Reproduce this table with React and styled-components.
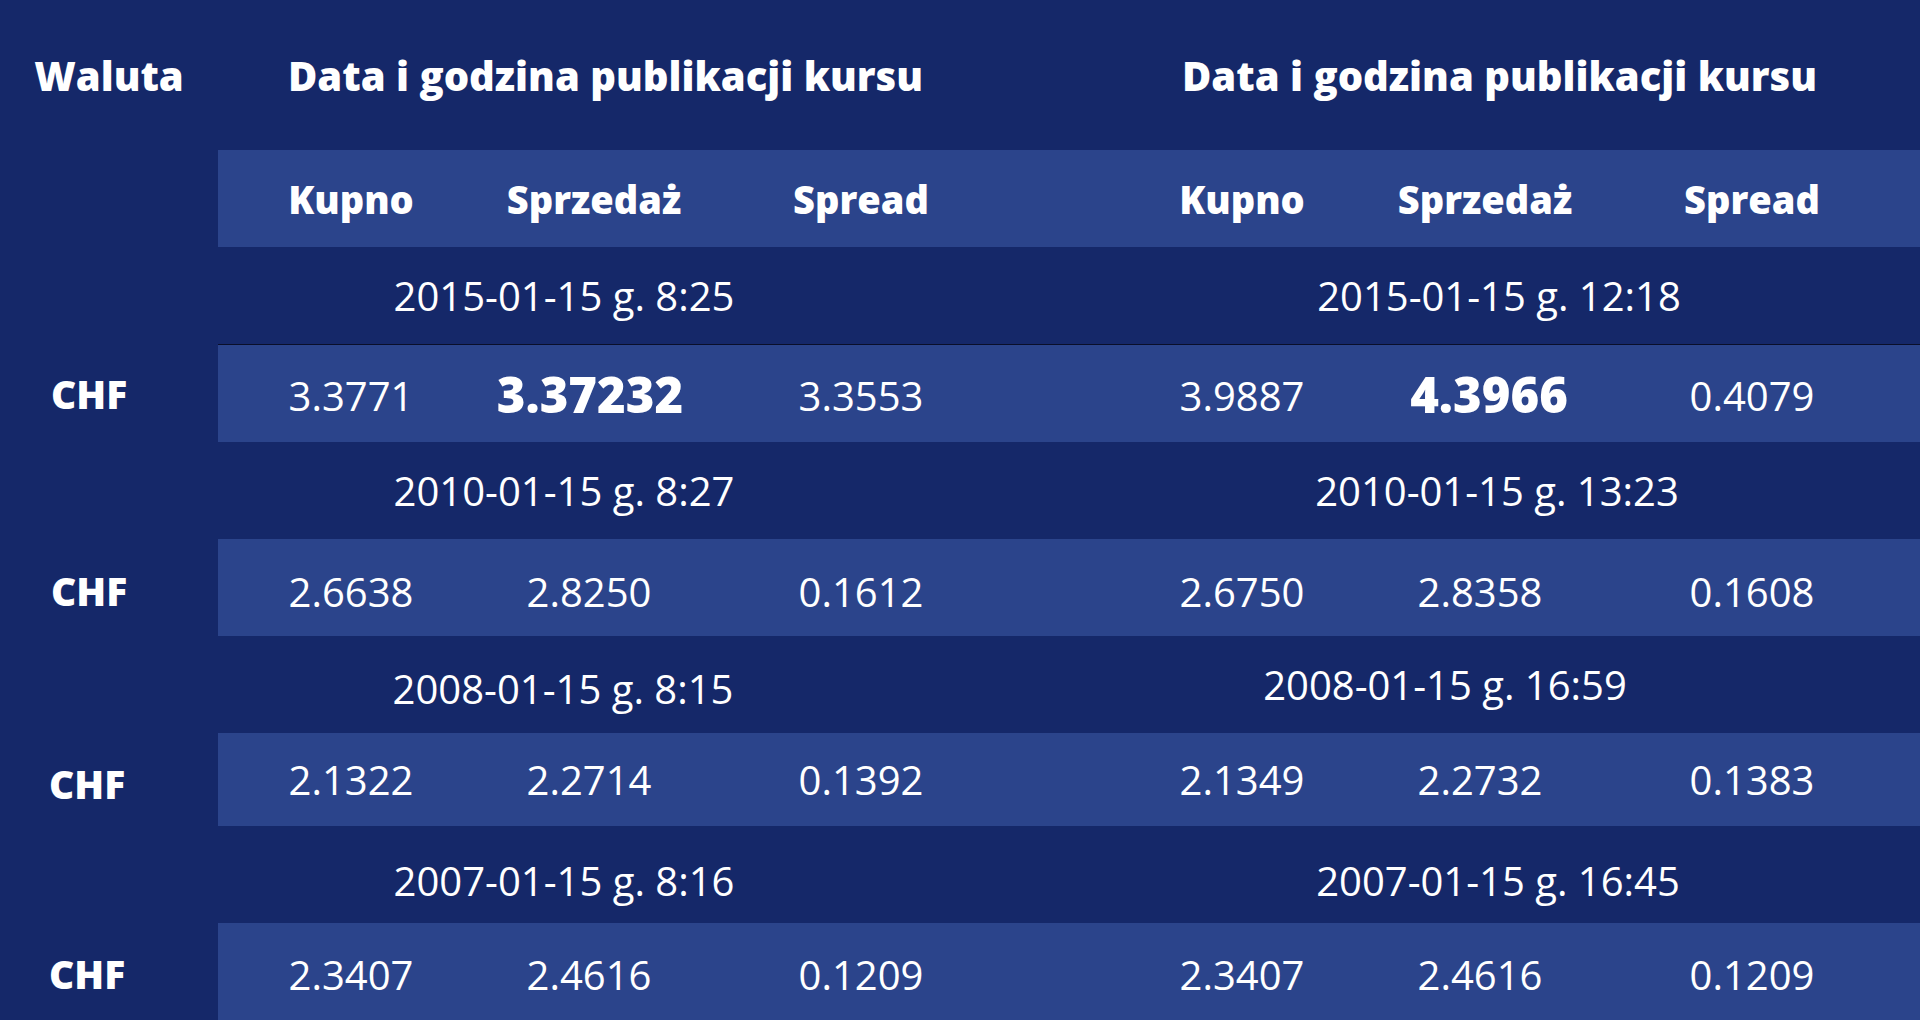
import React from 'react';
import styled, { createGlobalStyle } from 'styled-components';

const GlobalStyle = createGlobalStyle`
  html, body {
    margin: 0;
    padding: 0;
    background: #152869;
  }
  body {
    font-family: 'Open Sans', 'Liberation Sans', sans-serif;
    color: #ffffff;
  }
`;

const DARK = '#152869';
const LIGHT = '#2b448b';

const Page = styled.div`
  width: 1920px;
  height: 1020px;
  overflow: hidden;
  background: ${DARK};
`;

const Row = styled.div`
  display: grid;
  grid-template-columns: 218px 891px 891px;
  height: ${(p) => p.$h}px;
  width: 2000px;
`;

const SideCell = styled.div`
  display: flex;
  align-items: center;
  justify-content: ${(p) => (p.$center ? 'center' : 'flex-start')};
  padding-left: ${(p) => p.$pad || 0}px;
  padding-top: ${(p) => p.$dy || 0}px;
  font-weight: 800;
  font-size: ${(p) => p.$size || 39}px;
  background: ${DARK};
`;

const TitleCell = styled.div`
  display: flex;
  align-items: center;
  padding-left: ${(p) => p.$pad}px;
  font-weight: 800;
  font-size: 40px;
  white-space: nowrap;
`;

const Band = styled.div`
  display: grid;
  grid-column: 2 / 4;
  grid-template-columns: 891px 891px;
  background: ${(p) => (p.$light ? LIGHT : DARK)};
  border-top: ${(p) => (p.$divider ? '1px solid #0a0f2a' : 'none')};
`;

const Triple = styled.div`
  display: grid;
  grid-template-columns: 266px 220px 314px 91px;
  align-items: center;
`;

const HeadText = styled.div`
  text-align: center;
  font-weight: 800;
  font-size: 38px;
`;

const Value = styled.div`
  text-align: center;
  font-weight: ${(p) => (p.$strong ? 800 : 400)};
  font-size: ${(p) => (p.$strong ? 49 : 40)}px;
  padding-top: ${(p) => p.$dy || 0}px;
  padding-left: ${(p) => Math.max(0, 2 * (p.$shift || 0))}px;
  padding-right: ${(p) => Math.max(0, -2 * (p.$shift || 0))}px;
`;

const DateCell = styled.div`
  display: flex;
  align-items: center;
`;

const DateText = styled.div`
  width: ${(p) => p.$center * 2}px;
  text-align: center;
  font-size: 40px;
  padding-top: ${(p) => p.$dy || 0}px;
  white-space: nowrap;
`;

const records = [
  {
    h: [97, 97],
    divider: true,
    strong: true,
    dy: 4,
    chf: { pad: 51, dy: 1 },
    sides: [
      { date: '2015-01-15 g. 8:25', center: 346, strongShift: -4, values: ['3.3771', '3.37232', '3.3553'] },
      { date: '2015-01-15 g. 12:18', center: 390, strongShift: 4, values: ['3.9887', '4.3966', '0.4079'] },
    ],
  },
  {
    h: [97, 97],
    dy: 8,
    chf: { pad: 51, dy: 6 },
    sides: [
      { date: '2010-01-15 g. 8:27', center: 346, values: ['2.6638', '2.8250', '0.1612'] },
      { date: '2010-01-15 g. 13:23', center: 388, values: ['2.6750', '2.8358', '0.1608'] },
    ],
  },
  {
    h: [97, 93],
    chf: { pad: 49, dy: 8 },
    sides: [
      { date: '2008-01-15 g. 8:15', center: 345, values: ['2.1322', '2.2714', '0.1392'], dateDy: 8 },
      { date: '2008-01-15 g. 16:59', center: 336, values: ['2.1349', '2.2732', '0.1383'] },
    ],
  },
  {
    h: [97, 97],
    dy: 6,
    chf: { pad: 49, dy: 3 },
    sides: [
      { date: '2007-01-15 g. 8:16', center: 346, values: ['2.3407', '2.4616', '0.1209'], dateDy: 12 },
      { date: '2007-01-15 g. 16:45', center: 389, values: ['2.3407', '2.4616', '0.1209'], dateDy: 12 },
    ],
  },
];

const Record = ({ record }) => (
  <>
    <Row $h={record.h[0]}>
      <SideCell />
      <Band>
        {record.sides.map((s) => (
          <DateCell key={s.date}>
            <DateText $center={s.center} $dy={s.dateDy}>
              {s.date}
            </DateText>
          </DateCell>
        ))}
      </Band>
    </Row>
    <Row $h={record.h[1] + (record.divider ? 1 : 0)}>
      <SideCell $pad={record.chf.pad} $dy={record.chf.dy}>
        CHF
      </SideCell>
      <Band $light $divider={record.divider}>
        {record.sides.map((s) => (
          <Triple key={s.date}>
            {s.values.map((v, i) => {
              const strong = record.strong && i === 1;
              return (
                <Value
                  key={i}
                  $strong={strong}
                  $dy={strong ? 0 : record.dy}
                  $shift={strong ? s.strongShift : i === 1 ? -5 : 0}
                >
                  {v}
                </Value>
              );
            })}
          </Triple>
        ))}
      </Band>
    </Row>
  </>
);

const App = () => (
  <Page>
    <GlobalStyle />
    <Row $h={150}>
      <SideCell $center $size={40}>
        Waluta
      </SideCell>
      <TitleCell $pad={70}>Data i godzina publikacji kursu</TitleCell>
      <TitleCell $pad={73}>Data i godzina publikacji kursu</TitleCell>
    </Row>
    <Row $h={97}>
      <SideCell />
      <Band $light>
        {[0, 1].map((k) => (
          <Triple key={k}>
            <HeadText>Kupno</HeadText>
            <HeadText>Sprzedaż</HeadText>
            <HeadText>Spread</HeadText>
          </Triple>
        ))}
      </Band>
    </Row>
    {records.map((r, i) => (
      <Record key={i} record={r} />
    ))}
  </Page>
);

export default App;
